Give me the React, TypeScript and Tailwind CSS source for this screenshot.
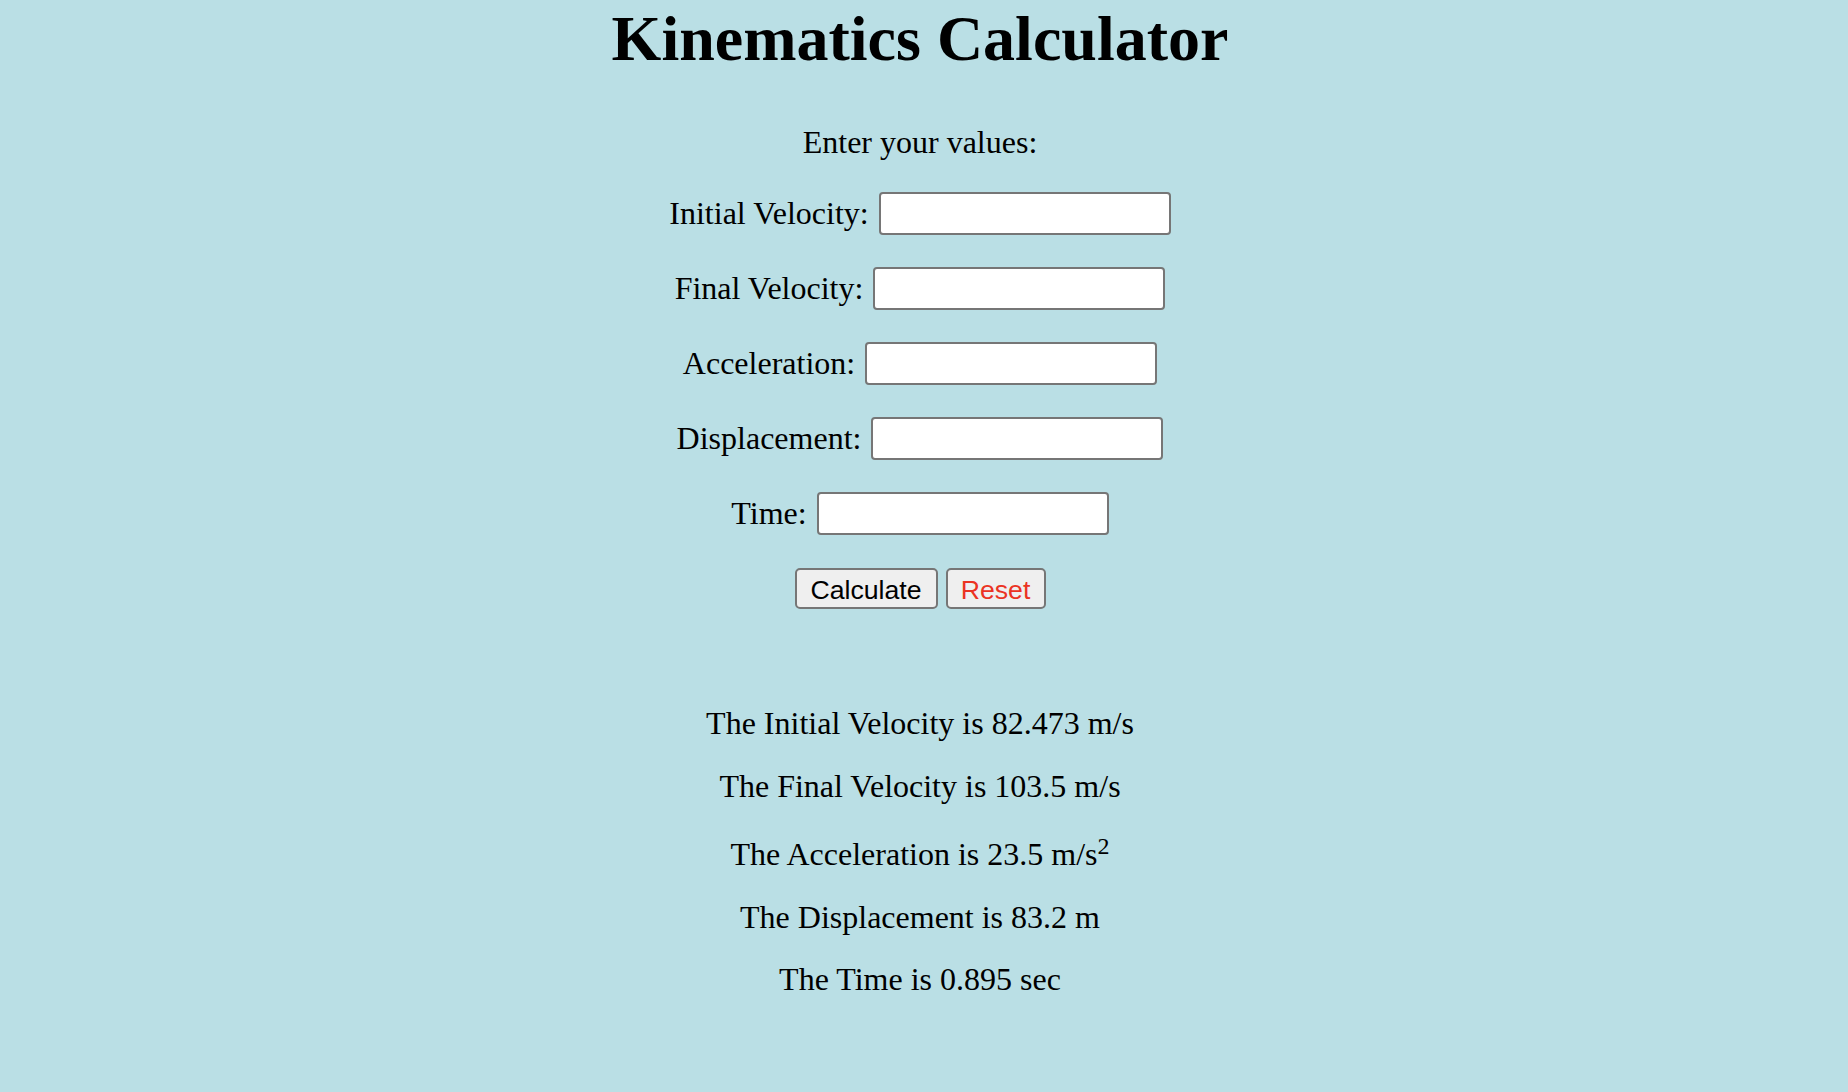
import React from "react";

const rows = [
  "Initial Velocity:",
  "Final Velocity:",
  "Acceleration:",
  "Displacement:",
  "Time:",
];

export default function App() {
  return (
    <div
      className="min-h-screen w-full bg-[#badfe5] pr-2 pt-[3px] text-center text-black"
      style={{ fontFamily: '"Liberation Serif", "Times New Roman", serif' }}
    >
      <h1 className="text-[64px] font-bold leading-[71px]">
        Kinematics Calculator
      </h1>
      <p className="mt-[50px] text-[32px] leading-[36px]">Enter your values:</p>
      <div className="mt-[32px] flex flex-col items-center gap-[33px]">
        {rows.map((label) => (
          <div key={label} className="flex h-[42px] items-center justify-center gap-[10px]">
            <span className="text-[32px] leading-[36px]">{label}</span>
            <input
              type="text"
              className="h-[43px] w-[292px] rounded-[4px] border-2 border-[#767676] bg-white px-1 text-[26px] outline-none"
            />
          </div>
        ))}
        <div
          className="flex h-[42px] items-center justify-center gap-2"
          style={{ fontFamily: '"Liberation Sans", Arial, sans-serif' }}
        >
          <button className="h-[41px] w-[143px] rounded-[5px] border-2 border-[#767676] bg-[#efefef] text-[26.67px] text-black">
            Calculate
          </button>
          <button className="h-[41px] w-[100px] rounded-[5px] border-2 border-[#767676] bg-[#efefef] text-[26.67px] text-[#eb3323]">
            Reset
          </button>
        </div>
      </div>
      <div className="mt-[96px] flex flex-col text-[32px] leading-[36px]">
        <div>The Initial Velocity is 82.473 m/s</div>
        <div className="mt-[27px]">The Final Velocity is 103.5 m/s</div>
        <div className="mt-[32px]">
          The Acceleration is 23.5 m/s
          <span className="relative -top-[11px] text-[24px] leading-none">2</span>
        </div>
        <div className="mt-[27px]">The Displacement is 83.2 m</div>
        <div className="mt-[26px]">The Time is 0.895 sec</div>
      </div>
    </div>
  );
}
